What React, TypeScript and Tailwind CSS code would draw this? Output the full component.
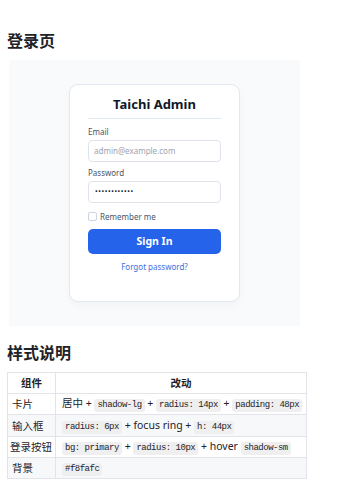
import React from "react";

const Code = ({ children }: { children: React.ReactNode }) => (
  <code className="inline-block rounded-[3px] bg-[#efeff0] px-[3px] py-[1px] font-['Liberation_Mono','DejaVu_Sans_Mono',monospace] text-[9px] leading-[11px] tracking-[-0.5px] text-[#1f2328]">
    {children}
  </code>
);

export default function App() {
  return (
    <div className="h-[500px] w-[339px] bg-white px-[7px] font-['Noto_Sans','Noto_Sans_CJK_SC',sans-serif] text-[#1f2328]">
      <h2 className="pt-[29px] font-['Noto_Sans_CJK_SC',sans-serif] text-[16px] font-bold leading-[22px]">登录页</h2>

      <div className="ml-[2px] mt-[9px] flex h-[266px] w-[291px] items-center justify-center bg-[#f8fafc]">
        <div className="flex w-[171px] flex-col rounded-[9px] border border-[#e2e8f0] bg-white px-[18px] pb-[29px] pt-[11px] shadow-[0_4px_8px_rgba(15,23,42,0.03)]">
          <div className="text-center text-[13px] font-bold leading-[16px] text-[#0f172a]">Taichi Admin</div>
          <div className="mt-[6px] h-px bg-[#e2e8f0]" />
          <label className="mt-[8px] text-[8px] leading-[10px] text-[#475569]">Email</label>
          <div className="mt-[3px] flex h-[22px] items-center rounded-[4px] border border-[#dfe4ec] px-[5px] text-[8px] text-[#9ca3af]">
            admin@example.com
          </div>
          <label className="mt-[6px] text-[8px] leading-[10px] text-[#475569]">Password</label>
          <div className="mt-[3px] flex h-[22px] items-center rounded-[4px] border border-[#dfe4ec] px-[6px] text-[7px] tracking-[0.6px] text-[#111827]">
            ••••••••••••
          </div>
          <div className="mt-[8px] flex h-[11px] items-center gap-[3px]">
            <span className="h-[9px] w-[9px] rounded-[2px] border border-[#cbd5e1] bg-white" />
            <span className="text-[8px] leading-[10px] text-[#475569]">Remember me</span>
          </div>
          <div className="mt-[7px] flex h-[25px] items-center justify-center rounded-[5px] bg-[#2563eb] text-[10.5px] font-bold text-white">
            Sign In
          </div>
          <div className="mt-[8px] text-center text-[8px] leading-[10px] text-[#3b6fe0]">Forgot password?</div>
        </div>
      </div>

      <h2 className="mt-[15px] font-['Noto_Sans_CJK_SC',sans-serif] text-[16px] font-bold leading-[22px]">样式说明</h2>

      <table className="mt-[9px] w-[300px] table-fixed border-collapse text-[10.5px] leading-[14px]">
        <colgroup>
          <col className="w-[48px]" />
          <col />
        </colgroup>
        <thead>
          <tr className="h-[21px] bg-white">
            <th className="border border-[#e1e4e8] font-bold">组件</th>
            <th className="border border-[#e1e4e8] font-bold">改动</th>
          </tr>
        </thead>
        <tbody>
          <tr className="h-[21px] bg-white">
            <td className="whitespace-nowrap border border-[#e1e4e8] px-[4px]">卡片</td>
            <td className="whitespace-nowrap border border-[#e1e4e8] px-[6px]">
              居中 + <Code>shadow-lg</Code> + <Code>radius: 14px</Code> + <Code>padding: 48px</Code>
            </td>
          </tr>
          <tr className="h-[22px] bg-[#f7f8f9]">
            <td className="whitespace-nowrap border border-[#e1e4e8] px-[4px]">输入框</td>
            <td className="whitespace-nowrap border border-[#e1e4e8] px-[6px]">
              <Code>radius: 6px</Code> + focus ring + <Code>h: 44px</Code>
            </td>
          </tr>
          <tr className="h-[21px] bg-white">
            <td className="whitespace-nowrap border border-[#e1e4e8] px-[2px]">登录按钮</td>
            <td className="whitespace-nowrap border border-[#e1e4e8] px-[6px]">
              <Code>bg: primary</Code> + <Code>radius: 10px</Code> + hover <Code>shadow-sm</Code>
            </td>
          </tr>
          <tr className="h-[21px] bg-[#f7f8f9]">
            <td className="whitespace-nowrap border border-[#e1e4e8] px-[4px]">背景</td>
            <td className="whitespace-nowrap border border-[#e1e4e8] px-[6px]">
              <Code>#f8fafc</Code>
            </td>
          </tr>
        </tbody>
      </table>
    </div>
  );
}
